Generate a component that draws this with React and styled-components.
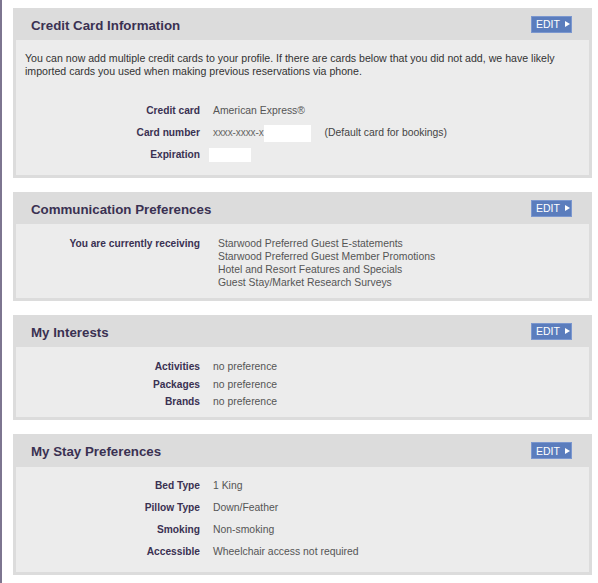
import React from "react";
import styled, { createGlobalStyle } from "styled-components";

const Global = createGlobalStyle`
  html, body { margin: 0; padding: 0; background: #ffffff; }
  body { font-family: "Liberation Sans", Arial, sans-serif; }
  * { box-sizing: border-box; }
`;

const Page = styled.div`
  min-height: 100vh;
  border-left: 2px solid #7d7590;
  padding: 8px 6px 8px 11px;
  display: flex;
  flex-direction: column;
  gap: 14px;
`;

const Panel = styled.section`
  background: #dcdcdc;
  padding: 0 3px 3px 3px;
`;

const Header = styled.div`
  height: ${(p) => p.$h || 32}px;
  display: flex;
  align-items: center;
  justify-content: space-between;
  padding: 0 17px 0 15px;
`;

const Title = styled.h2`
  margin: 0;
  padding-top: 2px;
  font-size: 13.3px;
  font-weight: bold;
  color: #3a3152;
`;

const EditButton = styled.button`
  width: 41px;
  height: 17px;
  border: 1px solid #7b97cf;
  background: #5b7dbd;
  color: #ffffff;
  font-family: "Liberation Sans", Arial, sans-serif;
  font-size: 10.5px;
  padding: 0 0 0 4px;
  display: inline-flex;
  align-items: center;
  gap: 5px;
  cursor: pointer;
`;

const Tri = styled.span`
  width: 0;
  height: 0;
  border-top: 3.5px solid transparent;
  border-bottom: 3.5px solid transparent;
  border-left: 5px solid #ffffff;
`;

const Body = styled.div`
  background: #ececec;
  padding: ${(p) => p.$pad};
  font-size: 10.5px;
  color: #333333;
`;

const Intro = styled.p`
  margin: 0 0 22px 0;
  padding-left: 9px;
  font-size: 10.6px;
  line-height: 13px;
  color: #333333;
`;

const Grid = styled.div`
  display: grid;
  grid-template-columns: 184px 1fr;
  column-gap: ${(p) => p.$gap || 13}px;
  line-height: ${(p) => p.$lh}px;
`;

const Label = styled.div`
  text-align: right;
  font-weight: bold;
  font-size: 10.2px;
  color: #3a3152;
`;

const Value = styled.div`
  color: #555555;
  font-size: 10.4px;
  display: flex;
  align-items: center;
`;

const Masked = styled.span`
  font-size: 10px;
  letter-spacing: -0.1px;
  color: #666666;
`;

const Redact = styled.span`
  display: inline-block;
  width: ${(p) => p.$w}px;
  height: ${(p) => p.$h}px;
  background: #ffffff;
  margin-left: ${(p) => p.$ml || 0}px;
`;

const Note = styled.span`
  margin-left: 14px;
  color: #444444;
`;

function Edit() {
  return (
    <EditButton>
      EDIT <Tri />
    </EditButton>
  );
}

function PanelHead({ title, h }) {
  return (
    <Header $h={h}>
      <Title>{title}</Title>
      <Edit />
    </Header>
  );
}

export default function App() {
  return (
    <>
      <Global />
      <Page>
        <Panel>
          <PanelHead title="Credit Card Information" />
          <Body $pad="12px 0 9px 0">
            <Intro>
              You can now add multiple credit cards to your profile. If there are cards below that you did not add, we have likely
              <br />
              imported cards you used when making previous reservations via phone.
            </Intro>
            <Grid $lh={22}>
              <Label>Credit card</Label>
              <Value>American Express®</Value>
              <Label>Card number</Label>
              <Value>
                <Masked>xxxx-xxxx-x</Masked>
                <Redact $w={47} $h={17} />
                <Note>(Default card for bookings)</Note>
              </Value>
              <Label>Expiration</Label>
              <Value>
                <Redact $w={42} $h={14} $ml={-4} />
              </Value>
            </Grid>
          </Body>
        </Panel>

        <Panel>
          <PanelHead title="Communication Preferences" />
          <Body $pad="12.5px 0 9.5px 0">
            <Grid $lh={13} $gap={18}>
              <Label>You are currently receiving</Label>
              <div>
                <Value>Starwood Preferred Guest E-statements</Value>
                <Value>Starwood Preferred Guest Member Promotions</Value>
                <Value>Hotel and Resort Features and Specials</Value>
                <Value>Guest Stay/Market Research Surveys</Value>
              </div>
            </Grid>
          </Body>
        </Panel>

        <Panel>
          <PanelHead title="My Interests" />
          <Body $pad="11px 0 6.5px 0">
            <Grid $lh={17.5}>
              <Label>Activities</Label>
              <Value>no preference</Value>
              <Label>Packages</Label>
              <Value>no preference</Value>
              <Label>Brands</Label>
              <Value>no preference</Value>
            </Grid>
          </Body>
        </Panel>

        <Panel>
          <PanelHead title="My Stay Preferences" h={33} />
          <Body $pad="8px 0 9px 0">
            <Grid $lh={22}>
              <Label>Bed Type</Label>
              <Value>1 King</Value>
              <Label>Pillow Type</Label>
              <Value>Down/Feather</Value>
              <Label>Smoking</Label>
              <Value>Non-smoking</Value>
              <Label>Accessible</Label>
              <Value>Wheelchair access not required</Value>
            </Grid>
          </Body>
        </Panel>
      </Page>
    </>
  );
}
